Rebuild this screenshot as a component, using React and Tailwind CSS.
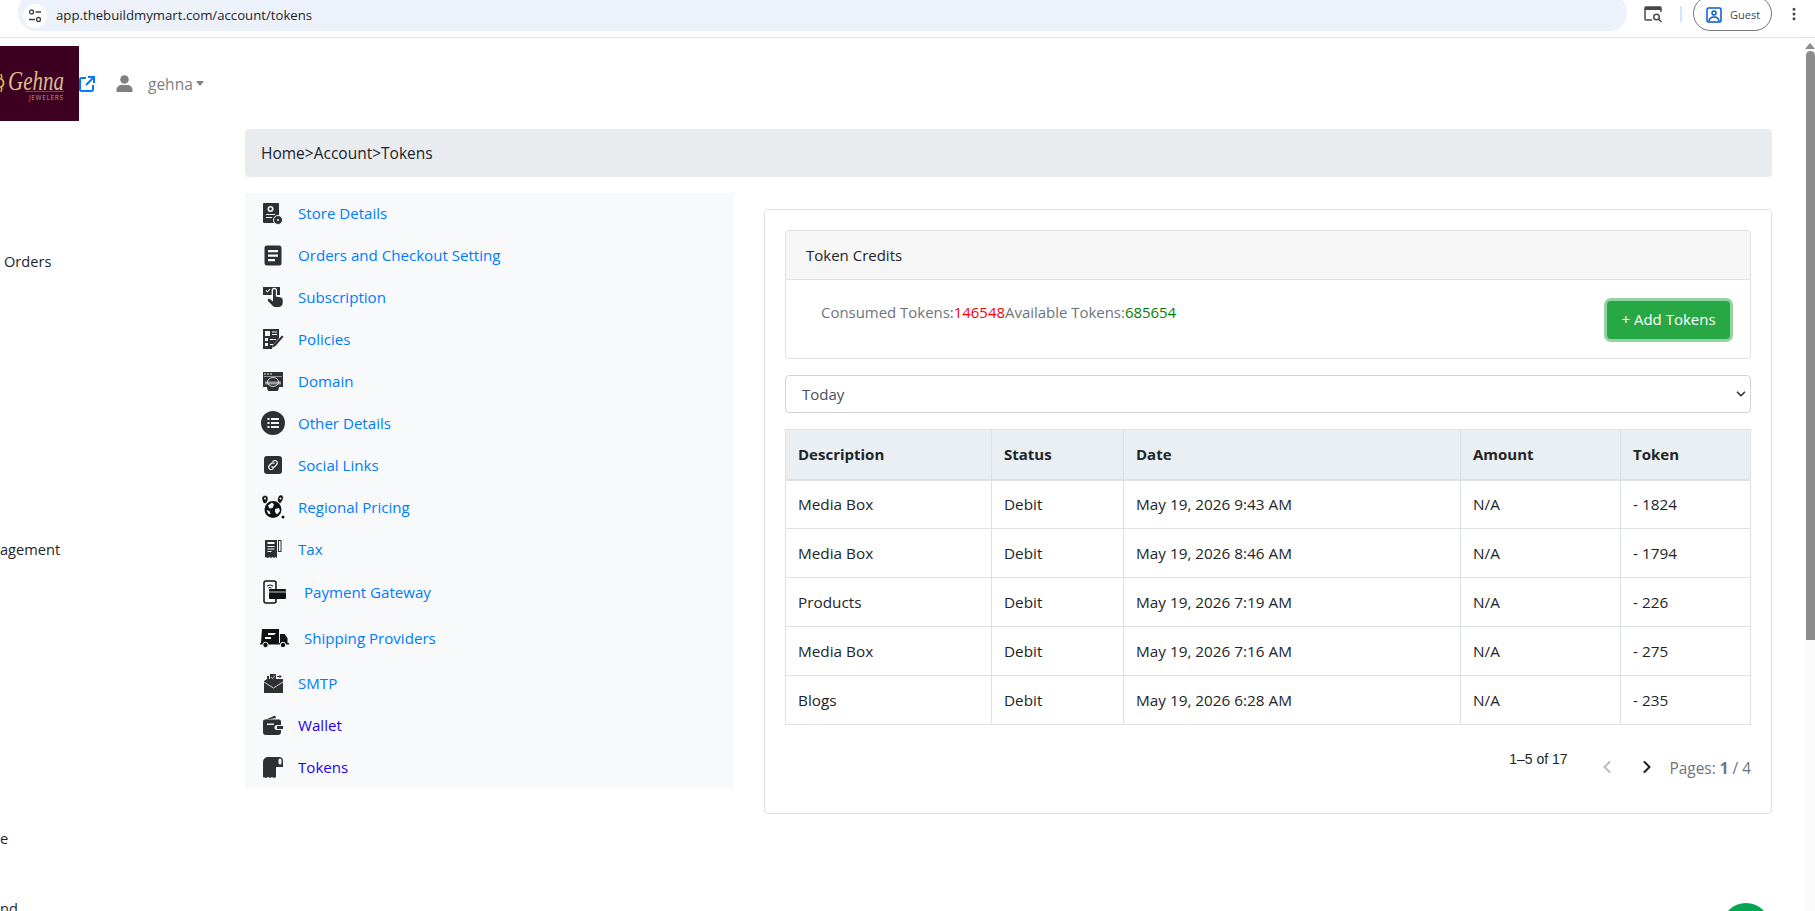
import React from 'react';
import { ChevronLeft, ChevronRight, ChevronDown, EllipsisVertical } from 'lucide-react';

const DARK = '#2f3033';

// sidebar glyphs, drawn roughly after the originals
const StoreIcon = () => (
  <svg width="22" height="24" viewBox="0 0 22 24" fill={DARK}>
    <rect x="1" y="1" width="16" height="20" rx="1" />
    <circle cx="8.5" cy="7" r="3" fill="#f8f9fa" />
    <circle cx="8.5" cy="7" r="1.4" />
    <path d="M4 12h9v1H4zM4 15h6v1H4z" fill="#f8f9fa" />
    <circle cx="16" cy="18" r="4.5" stroke="#f8f9fa" />
    <circle cx="16" cy="18" r="1" fill="#f8f9fa" />
  </svg>
);
const OrdersIcon = () => (
  <svg width="18" height="21" viewBox="0 0 18 21" fill={DARK}>
    <rect x="0.5" y="0.5" width="17" height="20" rx="2.5" />
    <path d="M4 5h10v2.2H4zM4 9.5h10v2.2H4zM4 14h7v2.2H4z" fill="#f8f9fa" />
  </svg>
);
const SubscriptionIcon = () => (
  <svg width="20" height="20" viewBox="0 0 20 20" fill={DARK}>
    <path d="M0 0h17v8h-3V3.500a2.700 2.700 0 0 0-5.400 0V8H0z" />
    <path d="M3 3.500l1.500 1.300L7 2" stroke="#f8f9fa" fill="none" strokeWidth="1.100" />
    <path d="M10 3.500c0-1.700 2.800-1.700 2.800 0V9.500l4.200.8c1.900.4 2.700 1.500 2.700 3.200V16c0 2.300-1.700 4-4 4h-3.200c-1.500 0-2.500-.6-3.300-1.800L5 14c-.9-1.400.9-2.900 2.200-1.700L10 14.500z" />
  </svg>
);
const PoliciesIcon = () => (
  <svg width="21" height="21" viewBox="0 0 21 21" fill={DARK}>
    <path d="M0 0h16v9l-6 7-1 4H0z" />
    <path d="M2 2h5v5H2zM9 2.500h5v1H9zM9 5h5v1H9zM2 9h3v3H2zM7 10h6v1H7zM2 14h3v3H2zM7 15h3v1H7z" fill="#f8f9fa" />
    <path d="M19 6.500l1.500 1.200-8 9.300-2.800 1.500.8-3z" />
  </svg>
);
const DomainIcon = () => (
  <svg width="20" height="19" viewBox="0 0 20 19" fill={DARK}>
    <path d="M0 0h20v15h-4a6 6 0 0 1-12 0H0z" />
    <path d="M1 1.500h2v1H1zM4 1.500h2v1H4zM7 1.500h2v1H7zM1 4h18v.6H1z" fill="#f8f9fa" />
    <ellipse cx="10" cy="10" rx="5.500" ry="4.500" fill="none" stroke="#f8f9fa" strokeWidth="0.8" />
    <path d="M2 9.500h16v3H2z" fill="#f8f9fa" opacity="0.55" />
    <path d="M5 16.500a6 6 0 0 0 10 0" fill="none" stroke={DARK} strokeWidth="1.600" strokeDasharray="1 0.700" />
  </svg>
);
const OtherIcon = () => (
  <svg width="24" height="24" viewBox="0 0 24 24" fill={DARK}>
    <circle cx="12" cy="12" r="12" />
    <path d="M6.500 7h2v2h-2zM10 7h8v2h-8zM6.500 11h2v2h-2zM10 11h8v2h-8zM6.500 15h2v2h-2zM10 15h8v2h-8z" fill="#f8f9fa" />
  </svg>
);
const SocialIcon = () => (
  <svg width="18" height="18" viewBox="0 0 18 18">
    <rect width="18" height="18" rx="3" fill={DARK} />
    <path d="M7.500 10.500a2.300 2.300 0 0 0 3.300 0l1.800-2a2.300 2.300 0 0 0-3.300-3.300l-.8.8M10.500 7.500a2.300 2.300 0 0 0-3.300 0l-1.800 2a2.300 2.300 0 0 0 3.300 3.300l.8-.8" fill="none" stroke="#f8f9fa" strokeWidth="1.200" />
  </svg>
);
const RegionalIcon = () => (
  <svg width="23" height="24" viewBox="0 0 23 24" fill="#111">
    <circle cx="11" cy="14.500" r="8.500" />
    <path d="M6 10.500l4-3 2 2-1.500 3.500-3 .5zM13 14l4-1 1 3-3 3.500-2-2.500zM4.500 15l3 1 1 3-2 0z" fill="#f8f9fa" />
    <path d="M3 0.500a3 3 0 0 1 3 3c0 1.500-1 3.500-1.500 4.500L2 8.500C1 7.500 0 5 0 3.500a3 3 0 0 1 3-3z" stroke="#f8f9fa" strokeWidth="0.500" />
    <path d="M18.500 0a2.800 2.800 0 0 1 2.800 3c0 1.500-2 4.500-3.300 5.500L16 7c-.5-1-.5-2.500 0-4a3 3 0 0 1 2.500-3z" stroke="#f8f9fa" strokeWidth="0.500" />
    <circle cx="3" cy="3.500" r="1" fill="#f8f9fa" />
    <circle cx="18.500" cy="3.500" r="1" fill="#f8f9fa" />
    <circle cx="21" cy="22" r="1.500" />
  </svg>
);
const TaxIcon = () => (
  <svg width="17" height="20" viewBox="0 0 17 20" fill={DARK}>
    <path d="M0 1h12v18l-1.500-1-1.500 1-1.500-1-1.500 1-1.500-1-1.500 1L0 18z" />
    <path d="M2.500 3h7v2h-7zM2.500 7h7v1h-7zM2.500 9.500h7v1h-7zM2.500 12h4v1h-4z" fill="#f8f9fa" />
    <path d="M13 1h3.500v12H13z" />
    <path d="M14 2h1.500v10H14z" fill="#f8f9fa" />
  </svg>
);
const PaymentIcon = () => (
  <svg className="ml-[3px]" width="23" height="24" viewBox="0 0 23 24">
    <rect x="1" y="1" width="12" height="22" rx="2" fill="#f8f9fa" stroke="#111" strokeWidth="1.500" />
    <path d="M4 6a5 5 0 0 1 6 0M5.500 8a3 3 0 0 1 3 0" stroke="#111" fill="none" />
    <rect x="6" y="9" width="17" height="10" rx="1" fill="#111" />
    <path d="M6 12h17" stroke="#f8f9fa" strokeWidth="0.800" />
  </svg>
);
const ShippingIcon = () => (
  <svg className="ml-[3px]" width="29" height="19" viewBox="0 0 29 19" fill="#111">
    <path d="M2 0h17v14H1z" />
    <path d="M20 5h4.500l3 4v5H20z" />
    <path d="M0 14h29v1.500H0z" />
    <path d="M8 4h6l2-0-2 2H8zM5 8h6v2H5z" fill="#f8f9fa" />
    <circle cx="5.500" cy="16" r="2.700" stroke="#f8f9fa" />
    <circle cx="23" cy="16" r="2.700" stroke="#f8f9fa" />
  </svg>
);
const SmtpIcon = () => (
  <svg width="19" height="19" viewBox="0 0 19 19" fill={DARK}>
    <path d="M0 7l3-2v-3h2v3l4 0 1 0h9v14H0z" />
    <path d="M0 8l9.500 6L19 8" fill="none" stroke="#f8f9fa" strokeWidth="0.800" />
    <rect x="6" y="0" width="6" height="6" />
    <path d="M7 3l1.500 1.500L11 1.500" fill="none" stroke="#f8f9fa" strokeWidth="0.800" />
    <path d="M13 2.500h4l-1.500-1.500M17 2.500L15.500 4" fill="none" stroke={DARK} />
  </svg>
);
const WalletIcon = () => (
  <svg width="20" height="20" viewBox="0 0 20 20" fill={DARK}>
    <path d="M2 5L12 0.500l1 2.500z" />
    <path d="M2 4.500h14a2 2 0 0 1 2 2V10h-4a2.500 2.500 0 0 0 0 5h4v2a3 3 0 0 1-3 3H3a3 3 0 0 1-3-3V6.500a2 2 0 0 1 2-2z" />
    <path d="M14 11h6v3h-6z" />
    <path d="M4 8.500h7v1.400H4z" fill="#f8f9fa" />
  </svg>
);
const TokensIcon = () => (
  <svg width="20" height="21" viewBox="0 0 20 21" fill={DARK}>
    <path d="M5 0h11a4 4 0 0 1 4 4v6h-7v10l-2 1-2-1-2 1-2-1-2 1-3-1V5a5 5 0 0 1 5-5z" />
    <rect x="15.500" y="1.500" width="3" height="6" rx="1.500" fill="#f8f9fa" />
  </svg>
);

const MENU = [
  { label: 'Store Details', icon: <StoreIcon /> },
  { label: 'Orders and Checkout Setting', icon: <OrdersIcon /> },
  { label: 'Subscription', icon: <SubscriptionIcon /> },
  { label: 'Policies', icon: <PoliciesIcon /> },
  { label: 'Domain', icon: <DomainIcon /> },
  { label: 'Other Details', icon: <OtherIcon /> },
  { label: 'Social Links', icon: <SocialIcon /> },
  { label: 'Regional Pricing', icon: <RegionalIcon /> },
  { label: 'Tax', icon: <TaxIcon /> },
  { label: 'Payment Gateway', icon: <PaymentIcon />, tall: true },
  { label: 'Shipping Providers', icon: <ShippingIcon />, tall: true },
  { label: 'SMTP', icon: <SmtpIcon /> },
  { label: 'Wallet', icon: <WalletIcon />, visited: true },
  { label: 'Tokens', icon: <TokensIcon />, visited: true },
];

const ROWS = [
  ['Media Box', 'Debit', 'May 19, 2026 9:43 AM', 'N/A', '- 1824'],
  ['Media Box', 'Debit', 'May 19, 2026 8:46 AM', 'N/A', '- 1794'],
  ['Products', 'Debit', 'May 19, 2026 7:19 AM', 'N/A', '- 226'],
  ['Media Box', 'Debit', 'May 19, 2026 7:16 AM', 'N/A', '- 275'],
  ['Blogs', 'Debit', 'May 19, 2026 6:28 AM', 'N/A', '- 235'],
];

const BrowserBar = () => (
  <header className="h-[38px] shrink-0 flex items-start overflow-hidden border-b border-[#e3e3e3] bg-white">
    <div className="ml-[18px] w-[1609px] h-[37px] -mt-[6px] pl-[5px] rounded-[18px] bg-[#ecf1fa] flex items-center gap-[9px]">
      <span className="w-[24px] h-[24px] mt-[6px] rounded-full bg-white flex items-center justify-center">
        <svg width="14" height="14" viewBox="0 0 14 14" fill="none" stroke="#3c4043" strokeWidth="1.300">
          <circle cx="3.500" cy="3" r="2" />
          <path d="M7.500 3H13M1 10.500h6" />
          <circle cx="10.500" cy="10.500" r="2" />
        </svg>
      </span>
      <span className="mt-[6px] text-[13.200px] text-[#1f1f1f]">app.thebuildmymart.com/account/tokens</span>
    </div>
    <svg className="ml-[17px] mt-[6px]" width="19" height="17" viewBox="0 0 19 17" fill="none" stroke="#474747" strokeWidth="1.500">
      <path d="M8 14H2a1 1 0 0 1-1-1V2a1 1 0 0 1 1-1h14a1 1 0 0 1 1 1v4" />
      <path d="M1 2.500h16" strokeWidth="3" />
      <circle cx="12.500" cy="11" r="2.800" />
      <path d="M14.500 13l3 3" />
    </svg>
    <span className="ml-[17px] mt-[6px] w-[2px] h-[16px] bg-[#d3e3fd]" />
    <div className="ml-[11px] -mt-[4px] w-[79px] h-[35px] rounded-[18px] border border-[#747775] flex items-center gap-[8px] pl-[12px] pt-[3px]">
      <svg width="16" height="16" viewBox="0 0 16 16" fill="none" stroke="#0b57d0" strokeWidth="1.500">
        <rect x="1" y="1" width="14" height="14" rx="1.500" />
        <circle cx="8" cy="6" r="2" />
        <path d="M3 14c.5-3 2.500-4 5-4s4.500 1 5 4" />
      </svg>
      <span className="text-[11px] text-[#474747]">Guest</span>
    </div>
    <EllipsisVertical className="ml-[14px] mt-[6px] text-[#474747]" size={16} strokeWidth={2.500} />
  </header>
);

const Logo = () => (
  <svg width="79" height="75" viewBox="0 0 79 75">
    <rect width="79" height="75" fill="#3d0020" />
    <circle cx="-1" cy="37" r="4.500" fill="none" stroke="#d8b24a" strokeWidth="2" />
    <path d="M1 28l1 4M1 46l1-4" stroke="#d8b24a" strokeWidth="1.500" />
    <text x="8" y="44" fontSize="28" fontStyle="italic" fontFamily='"Liberation Serif", serif' fill="#d8bf8e" textLength="56" lengthAdjust="spacingAndGlyphs">Gehna</text>
    <path d="M26 45.500h38" stroke="#8a6a55" strokeWidth="0.700" />
    <text x="29" y="54" fontSize="6.500" fontFamily='"Open Sans", sans-serif' fill="#b89a86" textLength="34">JEWELERS</text>
  </svg>
);

const LeftRail = () => (
  <aside className="w-[245px] shrink-0 overflow-hidden">
    <div className="mt-[8px] flex items-center">
      <Logo />
      <svg width="16" height="16" viewBox="0 0 16 16" fill="none" stroke="#007bff" strokeWidth="2">
        <path d="M7 2H2.500A1.500 1.500 0 0 0 1 3.500v10A1.500 1.500 0 0 0 2.500 15h10a1.500 1.500 0 0 0 1.500-1.500V9" />
        <path d="M9 1h6v6M15 1L7 9" />
      </svg>
      <svg className="ml-[21px]" width="17" height="17" viewBox="0 0 17 17" fill="#808080">
        <circle cx="8.500" cy="4.500" r="4.300" />
        <path d="M0.500 17v-2c0-3 2.500-5 5-5h6c2.500 0 5 2 5 5v2z" />
      </svg>
      <span className="ml-[15px] mt-[2px] text-[15.500px] text-[#808080]">gehna</span>
      <span className="ml-[3px] border-x-[4px] border-t-[5px] border-x-transparent border-t-[#808080]" />
    </div>
    <div className="mt-[128px] text-[14.600px] leading-[24px] text-[#212529]">
      <div className="pl-[4px]">Orders</div>
      <div className="mt-[264px]">agement</div>
      <div className="mt-[265px]">e</div>
      <div className="mt-[46px]">nd</div>
    </div>
  </aside>
);

const SideMenu = () => (
  <nav className="w-[489px] shrink-0 self-start bg-[#f8f9fa] pb-[1px]">
    {MENU.map((item, i) => (
      <a key={item.label} className={`flex items-center pl-[10px] text-[15.100px] ${i === 0 ? 'h-[41px]' : item.tall ? 'h-[46px] pb-[2px]' : 'h-[42px]'} ${item.visited ? 'text-[#2200ee]' : 'text-[#007bff]'}`}>
        <span className="w-[36px] flex justify-center shrink-0">{item.icon}</span>
        <span className={item.tall ? 'ml-[13px]' : 'ml-[7px]'}>{item.label}</span>
      </a>
    ))}
  </nav>
);

const TokenPanel = () => (
  <section className="flex-1 mt-[16px] border border-[#dfe2e5] rounded-[4px] p-[20px] pb-0 h-[605px] text-[15px] text-[#212529]">
    <div className="border border-[#dfe2e5] rounded-[4px] overflow-hidden">
      <div className="h-[49px] bg-[#f6f6f6] border-b border-[#dfe2e5] px-[20px] flex items-center">Token Credits</div>
      <div className="h-[78px] pl-[35px] pr-[20px] flex items-start justify-between">
        <p className="mt-[21px] text-[14.950px] text-[#6c757d]">
          Consumed Tokens:<span className="text-[#ff0000]">146548</span>Available Tokens:<span className="text-[#008000]">685654</span>
        </p>
        <button className="mt-[21px] w-[123px] h-[38px] pb-[2px] rounded-[4px] bg-[#28a745] text-white ring-[3px] ring-[#28a745]/50">+ Add Tokens</button>
      </div>
    </div>
    <div className="relative mt-[16px]">
      <select className="w-full h-[38px] appearance-none border border-[#ced4da] rounded-[4px] bg-white pl-[16px] pt-[1px] text-[#495057]">
        <option>Today</option>
      </select>
      <ChevronDown className="absolute right-[3px] top-[12px] text-[#343a40] pointer-events-none" size={14} strokeWidth={3} />
    </div>
    <table className="mt-[16px] w-full table-fixed border-collapse">
      <colgroup>
        <col className="w-[206px]" />
        <col className="w-[132px]" />
        <col className="w-[337px]" />
        <col className="w-[160px]" />
        <col />
      </colgroup>
      <thead>
        <tr className="h-[50px] bg-[#e9eff2]">
          {['Description', 'Status', 'Date', 'Amount', 'Token'].map((h) => (
            <th key={h} className="border border-[#dee2e6] border-b-2 px-[12px] text-left font-bold">{h}</th>
          ))}
        </tr>
      </thead>
      <tbody>
        {ROWS.map((row, i) => (
          <tr key={i} className="h-[49px]">
            {row.map((c, j) => (
              <td key={j} className="border border-[#dee2e6] px-[12px] text-[15.300px]">{c}</td>
            ))}
          </tr>
        ))}
      </tbody>
    </table>
    <div className="mt-[24px] flex justify-end items-start">
      <span className="text-[14px] leading-[20px]" style={{ fontFamily: '"Liberation Sans", sans-serif' }}>1–5 of 17</span>
      <ChevronLeft className="ml-[29px] mt-[8px] text-[#bdbdbd]" size={20} strokeWidth={2.500} />
      <ChevronRight className="ml-[20px] mt-[8px] text-[#212121]" size={20} strokeWidth={2.500} />
      <span className="ml-[13px] mt-[8px] text-[15.400px] text-[#6c757d]">Pages: <b>1</b> / 4</span>
    </div>
  </section>
);

const Scrollbar = () => (
  <div className="w-[10px] shrink-0 ml-[33px] bg-[#fbfbfb] flex flex-col items-center pt-[5px]">
    <span className="border-x-[5px] border-b-[6px] border-x-transparent border-b-[#8c8c8c]" />
    <span className="mt-[2px] w-[9px] h-[589px] rounded-t-[5px] bg-[#8c8c8c]" />
  </div>
);

const App = () => (
  <div className="h-screen overflow-hidden flex flex-col bg-white relative" style={{ fontFamily: '"Open Sans", "Noto Sans", sans-serif' }}>
    <BrowserBar />
    <div className="flex-1 flex min-h-0">
      <LeftRail />
      <main className="flex-1 min-w-0 pt-[91px]">
        <div className="h-[48px] rounded-[4px] bg-[#e9ecef] pl-[16px] pt-[2px] flex items-center text-[15.500px] text-[#212529]">Home&gt;Account&gt;Tokens</div>
        <div className="mt-[16px] flex gap-[30px]">
          <SideMenu />
          <TokenPanel />
        </div>
      </main>
      <Scrollbar />
    </div>
    {/* chat bubble, cut off by the window */}
    <span className="absolute left-[1722px] top-[903px] w-[48px] h-[48px] rounded-full bg-[#00a651]" />
  </div>
);

export default App;
